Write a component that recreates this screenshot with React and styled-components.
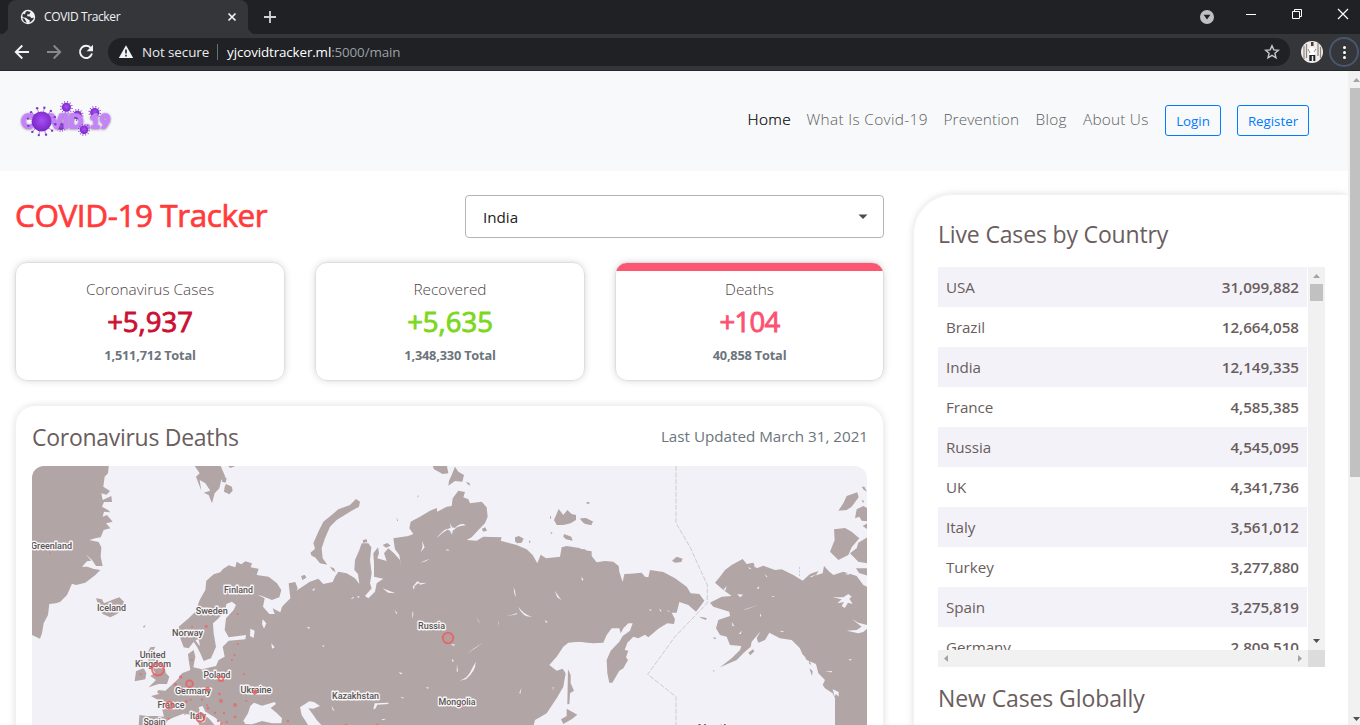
import React from "react";
import styled, { createGlobalStyle, css } from "styled-components";

const Global = createGlobalStyle`
  *, *::before, *::after { box-sizing: border-box; }
  html, body { margin: 0; height: 100%; overflow: hidden; }
  body { font-family: "Open Sans", "Noto Sans", sans-serif; background: #fff; }
`;

const Window = styled.div`
  width: 1360px;
  height: 725px;
  display: flex;
  flex-direction: column;
  overflow: hidden;
`;

/* ---------- browser chrome ---------- */

const TabStrip = styled.div`
  height: 34px;
  flex: none;
  display: flex;
  background: #202124;
  padding-left: 8px;
`;

const Tab = styled.div`
  position: relative;
  width: 240px;
  height: 34px;
  display: flex;
  align-items: center;
  padding: 0 9px 0 12px;
  background: #35363a;
  border-radius: 8px 8px 0 0;
  &::before, &::after {
    content: "";
    position: absolute;
    bottom: 0;
    width: 8px;
    height: 8px;
  }
  &::before { left: -8px; background: radial-gradient(circle at 0 0, #202124 8px, #35363a 8.5px); }
  &::after { right: -8px; background: radial-gradient(circle at 100% 0, #202124 8px, #35363a 8.5px); }
`;

const TabTitle = styled.span`
  flex: 1;
  margin: -1px 0 0 8px;
  font-size: 12px;
  letter-spacing: -0.38px;
  color: #f1f3f4;
`;

const NewTab = styled.div`
  width: 44px;
  display: flex;
  align-items: center;
  justify-content: center;
`;

const WindowControls = styled.div`
  margin-left: auto;
  display: flex;
  align-items: center;
  padding-right: 11px;
`;

const Toolbar = styled.div`
  height: 37px;
  flex: none;
  display: flex;
  align-items: center;
  background: #35363a;
  border-bottom: 1px solid #27282b;
  padding: 0 1px 0 14px;
`;

const NavIcons = styled.div`
  display: flex;
  gap: 16px;
  width: 94px;
  svg { display: block; }
`;

const AddressBar = styled.div`
  flex: none;
  width: 1182px;
  height: 28px;
  border-radius: 14px;
  background: #202124;
  display: flex;
  align-items: center;
  padding: 0 10px;
  font-size: 13.4px;
  color: #e8eaed;
`;

const Security = styled.span`
  margin-left: 8px;
  letter-spacing: -0.08px;
`;

const Separator = styled.span`
  width: 1px;
  height: 16px;
  margin: 0 9px 0 8px;
  background: #6b6e73;
`;

const Url = styled.span`
  flex: 1;
  color: #9aa0a6;
  letter-spacing: -0.13px;
  b { font-weight: 400; color: #fff; }
`;

const Avatar = styled.span`
  margin-left: 11px;
  width: 22px;
  height: 22px;
  svg { display: block; }
`;

const MenuButton = styled.span`
  margin-left: 6px;
  width: 30px;
  height: 30px;
  border: 2px solid #4b5671;
  border-radius: 50%;
  display: flex;
  flex-direction: column;
  align-items: center;
  justify-content: center;
  gap: 2px;
  i { width: 3px; height: 3px; border-radius: 50%; background: #fff; }
`;

/* ---------- page ---------- */

const Viewport = styled.div`
  flex: 1;
  min-height: 0;
  display: flex;
`;

const Page = styled.div`
  width: 1349px;
  overflow: hidden;
  color: #6a5d5d;
`;

const PageScroll = styled.div`
  flex: 1;
  display: flex;
  flex-direction: column;
  align-items: flex-start;
  background: #f1f1f1;
  padding: 7px 0 4px 2px;
  svg { margin-left: 3px; display: block; }
`;

const PageThumb = styled.div`
  width: 100%;
  height: 389px;
  margin: 6px 0 auto;
  background: #c1c1c1;
`;

const Navbar = styled.header`
  height: 100px;
  display: flex;
  align-items: center;
  background: #f8f9fb;
  padding: 0 40px 2px 16px;
`;

const Links = styled.nav`
  margin-left: auto;
  margin-right: -1px;
  display: flex;
  align-items: center;
  gap: 16px;
`;

const NavLink = styled.a`
  width: ${(p) => p.$w}px;
  margin-top: -2px;
  white-space: nowrap;
  font-size: 15.4px;
  font-weight: 300;
  letter-spacing: ${(p) => p.$ls || 0}px;
  color: ${(p) => (p.$active ? "#000" : "#5c5d5f")};
  ${(p) => p.$active && css`-webkit-text-stroke: 0.2px #000;`}
`;

const OutlineButton = styled.button`
  width: ${(p) => p.$w}px;
  height: 31px;
  margin-top: 1px;
  padding: 0;
  border: 1px solid #007bff;
  border-radius: 3px;
  background: transparent;
  font: 400 13.3px "Open Sans", sans-serif;
  color: #007bff;
`;

const Content = styled.main`
  display: flex;
  padding: 24px 0 0 15px;
  gap: 30px;
`;

const Left = styled.section`
  width: 869px;
`;

const TitleRow = styled.div`
  height: 43px;
  display: flex;
  justify-content: space-between;
  align-items: center;
`;

const Title = styled.h1`
  margin: -3px 0 0;
  font-size: 31.5px;
  font-weight: 400;
  line-height: 38px;
  letter-spacing: -0.42px;
  color: #ff3b3b;
  -webkit-text-stroke: 0.7px #ff3b3b;
`;

const Select = styled.div`
  width: 419px;
  height: 43px;
  display: flex;
  align-items: center;
  justify-content: space-between;
  padding: 0 14px 0 17px;
  border: 1px solid #b4b4b4;
  border-radius: 4px;
  font-size: 15.2px;
  color: #212121;
`;

const Stats = styled.div`
  display: grid;
  grid-template-columns: 270px 270px 269px;
  gap: 30px;
  margin-top: 24px;
`;

const StatCard = styled.article`
  height: 119px;
  border: 1px solid #dedede;
  border-radius: 12px;
  box-shadow: 0 0 8px -2px rgba(0, 0, 0, 0.25);
  overflow: hidden;
  display: flex;
  flex-direction: column;
  align-items: center;
  padding-top: 15px;
  ${(p) => p.$active && css`background: linear-gradient(#fc5673 8px, #fff 8px);`}
`;

const StatLabel = styled.div`
  font-size: 15.4px;
  font-weight: 300;
  line-height: 24px;
  color: #4f4444;
`;

const StatValue = styled.div`
  margin-top: 3px;
  font-size: 27.5px;
  font-weight: 400;
  line-height: 34px;
  letter-spacing: ${(p) => p.$ls || 0}px;
  color: ${(p) => p.$color};
  -webkit-text-stroke: 0.9px ${(p) => p.$color};
`;

const StatTotal = styled.div`
  margin-top: 7px;
  font-size: 12.8px;
  font-weight: 700;
  line-height: 18px;
  letter-spacing: -0.2px;
  color: #6c757d;
`;

const MapCard = styled.article`
  margin-top: 24px;
  height: 420px;
  border-radius: 20px;
  border: 1px solid #f1f1f1;
  padding: 0 16px;
  box-shadow: 0 0 8px -2px rgba(0, 0, 0, 0.2);
`;

const MapHeader = styled.div`
  height: 60px;
  display: flex;
  align-items: center;
  justify-content: space-between;
  padding-top: 1px;
`;

const Heading = styled.h2`
  margin: 0;
  font-size: 23px;
  font-weight: 400;
  line-height: 30px;
  letter-spacing: ${(p) => p.$ls || 0}px;
  color: #6a5d5d;
`;

const Updated = styled.span`
  margin: -2px -1px 0 0;
  font-size: 15.2px;
  color: #6c757d;
`;

const MapFrame = styled.div`
  width: 835px;
  height: 400px;
  border-radius: 12px;
  background: #f2f1f8;
  overflow: hidden;
  svg { display: block; }
  text {
    font-family: Roboto, sans-serif;
    font-size: 9.3px;
    font-weight: 500;
    fill: #5a5454;
    stroke: #f6f4f6;
    stroke-width: 2.8px;
    stroke-linejoin: round;
    paint-order: stroke;
    text-anchor: middle;
  }
`;

const Side = styled.aside`
  flex: none;
  width: 435px;
  height: 600px;
  margin: -1px 0 0 -1px;
  padding: 24px 24px 0;
  border: 1px solid #f3f3f3;
  border-right: 0;
  border-radius: 40px 0 0 0;
  box-shadow: 0 0 8px -2px rgba(0, 0, 0, 0.22);
`;

const TableBox = styled.div`
  width: 387px;
  height: 400px;
  margin: 18px 0 16px 0;
  display: grid;
  grid-template-columns: 370px 17px;
  grid-template-rows: 383px 17px;
`;

const Rows = styled.div`
  overflow: hidden;
  padding-right: 1px;
`;

const Row = styled.div`
  height: 40px;
  display: flex;
  justify-content: space-between;
  align-items: center;
  padding: 0 8px 0 8px;
  font-size: 15.2px;
  background: ${(p) => (p.$odd ? "#f3f2f8" : "#fff")};
`;

const Country = styled.span`
  letter-spacing: -0.05px;
`;

const Count = styled.span`
  font-weight: 600;
  letter-spacing: -0.06px;
`;

const VScroll = styled.div`
  background: #f1f1f1;
  display: flex;
  flex-direction: column;
  align-items: center;
  justify-content: space-between;
  padding: 7px 0;
`;

const VTop = styled.div`
  display: flex;
  flex-direction: column;
  align-items: center;
  gap: 6px;
`;

const VThumb = styled.div`
  width: 13px;
  height: 17px;
  background: #c1c1c1;
`;

const HScroll = styled.div`
  background: #f1f1f1;
  display: flex;
  align-items: center;
  justify-content: space-between;
  padding: 0 6px;
`;

const Corner = styled.div`
  background: #dcdcdc;
`;

const Arrow = ({ dir, dark }) => {
  const c = dark ? "#505050" : "#a3a3a3";
  if (dir === "up") return <svg width="7" height="4"><path d="M0 4 3.5 0 7 4z" fill={c} /></svg>;
  if (dir === "down") return <svg width="7" height="4"><path d="M0 0h7L3.5 4z" fill={c} /></svg>;
  if (dir === "left") return <svg width="4" height="7"><path d="M4 0v7L0 3.5z" fill={c} /></svg>;
  return <svg width="4" height="7"><path d="M0 0v7l4-3.5z" fill={c} /></svg>;
};

const GlobeIcon = () => (
  <svg width="16" height="16" viewBox="0 0 16 16">
    <circle cx="8" cy="8" r="7.2" fill="#f1f3f4" />
    <path d="M7.2 2.1 10.6 3 9.4 5.2 7 5.4 7.4 7.2 10 7.6 11.6 9.2 13.8 8.6 13.4 10.2 11 12.8 9.4 13.4 9.8 11.2 8.2 10.4 6 8.8 3.6 8.6 2.2 7.2 3 4.8 5 5.2 5.6 3z" fill="#35363a" />
    <path d="M2 8.8 4.6 9.8 5.8 11.8 6.6 13.9 3.8 12.6z" fill="#35363a" />
  </svg>
);

const Virus = ({ x, y, r, big }) => {
  const reach = big ? r + 4 : r + 1.4;
  return (
    <g>
      {Array.from({ length: 12 }, (_, k) => {
        const a = (k * Math.PI) / 6 + 0.2;
        const px = x + reach * Math.cos(a);
        const py = y + reach * Math.sin(a);
        return (
          <g key={k}>
            <line x1={x} y1={y} x2={px} y2={py} stroke="#a56bd8" strokeWidth="0.8" />
            <circle cx={px} cy={py} r={big ? 1.2 : 0.5} fill="#8636cc" />
          </g>
        );
      })}
      <circle cx={x} cy={y} r={r} fill="url(#v)" />
    </g>
  );
};

const Logo = () => (
  <svg width="104" height="60" viewBox="0 0 104 60">
    <defs>
      <radialGradient id="v" cx="50%" cy="45%">
        <stop offset="0" stopColor="#a94df5" />
        <stop offset="1" stopColor="#7c2acb" />
      </radialGradient>
      <filter id="soft" x="-10%" y="-30%" width="120%" height="160%">
        <feDropShadow dx="0" dy="0.5" stdDeviation="1" floodColor="#5d4a75" floodOpacity="0.8" />
      </filter>
    </defs>
    <g transform="translate(-16 0)">
      <Virus x={66.4} y={17.3} r={4.5} />
      <Virus x={94.7} y={22.4} r={4.5} />
      <Virus x={77.5} y={25} r={4.2} />
      <Virus x={61} y={36.5} r={3.4} />
      <g filter="url(#soft)" fill="#c583fa" stroke="#c583fa" strokeWidth="1.7" strokeLinejoin="round" fontFamily="Lato, sans-serif" fontWeight="900" fontSize="18.5">
        <text x="21.5" y="38.2" textLength="12" lengthAdjust="spacingAndGlyphs">C</text>
        <text x="50" y="38.2" textLength="33" lengthAdjust="spacingAndGlyphs">VID</text>
        <text x="85.5" y="38.2" textLength="25" lengthAdjust="spacingAndGlyphs">.19</text>
      </g>
      <Virus x={41.6} y={31.4} r={10} big />
      <Virus x={84} y={39.7} r={4.2} />
    </g>
  </svg>
);

/* ---------- map ---------- */

const LAND = "#b2a5a5";
const SEA = "#f2f1f8";

const westLand = [
  "M0 0H232L228 40 218 50 214 80 234 93 224 104 208 100 212 120 238 108 240 126 216 126 210 140 228 150 235 157 216 155 212 170 225 165 242 185 222 190 235 205 215 210 206 232 190 235 172 240 200 246 208 262 206 290 212 318 192 318 180 300 160 282 178 302 165 304 150 320 166 320 186 327 205 330 190 345 160 368 132 375 120 371 105 405 85 425 72 430 52 432 48 465 35 490 30 520 24 536 0 525Z",
  "M488 18H566L580 50 568 60 562 85 548 100 540 130 530 105 515 98 535 92 520 70 503 60 508 92 492 50 503 40ZM570 48l14 6-3 14-11-3ZM582 72l18 8 2 12-10 11-16-8 2-15ZM588 18h22l-15 6Z",
  "M192 415 210 418 216 430 240 420 262 412 276 425 275 448 255 462 235 472 212 462 205 450 215 440 198 432Z",
  "M440 500 470 475 490 455 503 420 520 390 523 362 545 343 565 337 572 328 590 316 610 322 614 305 628 313 640 304 660 310 656 322 680 326 674 345 710 350 735 370 748 390 742 412 720 420 690 408 676 404 698 415 693 440 712 462 728 462 722 445 745 457 750 440 775 415 770 370 790 366 797 385 790 402 810 385 830 368 850 362V800H320L322 765 345 768 372 768 396 770 390 745 378 720 357 708 380 702 378 690 400 692 425 670 440 655 450 640 475 630 470 600 468 582 485 570 490 590 484 622 510 628 552 618 560 600 578 590 572 560 590 542 640 538 642 525 590 532 578 510 582 475 605 450 612 435 600 425 583 432 580 450 560 475 543 490 545 520 552 560 537 595 515 603 505 580 495 560 485 545 470 565 455 562 445 535Z",
  "M348 575 355 562 370 560 362 575 385 580 380 600 398 625 402 640 412 650 405 672 380 672 350 682 372 660 355 648 370 638 350 610ZM312 634 335 624 343 640 340 658 308 664Z",
  "M808 350 818 345 822 352 812 360ZM835 278l10-8v22ZM334 500l6-6v5Z",
];
const westSea = [
  "M396 800 408 780 430 770 458 760 480 767 500 790 504 800ZM512 738 500 742 504 756 530 775 552 800H580L548 772 520 755Z",
  "M634 782 648 760 655 738 666 728 690 737 708 732 728 726 732 732 716 744 735 760 750 775 748 790 720 790 690 783 660 793 640 792Z",
  "M800 750 850 718V800H828L808 768Z",
  "M655 506 668 512 665 534 654 528ZM692 478 703 490 696 506 690 492ZM718 550l10 12-8 4ZM490 540l10-2 4 20-6-6ZM826 500l8 1-4 4ZM508 628l12 4-8 4Z",
];
const midLand = [
  "M-20 398 0 385 30 365 55 356 70 372 98 366 105 350 115 335 140 340 165 355 178 372 174 342 163 330 165 300 178 270 185 250 205 250 214 262 210 300 215 340 210 370 215 385 195 408 205 415 225 395 230 370 250 356 222 350 222 310 220 280 234 262 237 280 232 295 260 303 252 280 265 265 282 280 300 300 304 322 298 285 285 268 280 235 325 228 340 222 328 205 332 185 360 170 390 152 410 144 412 155 440 140 455 138 458 115 475 92 495 96 490 112 505 118 510 130 545 125 560 142 563 170 555 190 535 210 515 232 500 240 530 242 550 230 605 232 602 242 650 255 680 268 698 285 712 310 722 284 738 295 780 290 785 262 800 258 838 264 850 270 875 274V548L835 545 805 548 790 560 770 590 748 615 770 632 788 626 797 640 790 680 770 715 740 760 720 772 705 780 700 800H-20Z",
  "M168 117 180 125 177 140 150 155 110 180 90 200 75 235 65 265 68 295 82 314 60 310 45 292 32 285 45 265 40 250 55 215 70 185 95 165 115 148 150 135ZM90 320l12 5 5 12-10-6ZM4 348l10-3 5 8-12 6ZM188 240l12-2 2 8-12 3ZM248 255l14-6 10 8-14 6Z",
  "M397 14H440L445 40 428 42 402 28ZM465 20 475 35 492 45 487 65 465 63 445 77 447 62 455 45ZM498 65l10 4 3 8-8-4ZM546 206l10-4 5 10-12 3ZM645 232l12-4 14 8-6 12-14 2-6-6ZM688 240l4 6-5 4Z",
  "M776 147 790 165 802 150 815 162 828 165 828 180 812 190 790 195 770 195 762 180ZM840 176 855 175 875 184V196L850 188ZM792 222l22 8 4 12-20-4-8-8ZM860 126h6v5ZM750 165l4 10-4 2ZM752 215l6 4-5 3ZM290 172l4 10-3 2ZM352 108l4-2-2 8Z",
  "M804 628 812 645 812 670 822 692 810 700 808 732 802 733 803 680ZM800 746 832 764 815 778 790 792 783 778 800 768Z",
];
const midSea = [
  "M440 208 452 204 450 190 456 202 468 205 458 212 456 224 450 212ZM410 235Q425 212 442 206L440 211Q425 218 410 235ZM466 202Q480 190 490 192L498 196Q480 196 466 204Z",
  "M478 662Q505 655 515 628L527 606Q528 632 498 658ZM500 582Q525 562 552 547L530 562ZM655 440Q670 462 696 471L680 469Q662 460 655 440ZM620 469 652 459 650 463ZM641 382Q648 395 647 412Q641 400 641 382ZM764 392 784 420 772 412ZM816 412l12 14-10-6ZM336 452l4 10-2 15ZM471 612l3 25-4-4ZM366 242l8 20-12 15 6-17ZM360 308l28-12-10 8ZM338 380l14-16 8 3-16 10-2 12ZM356 370l25-2-20 6ZM248 385l38 15-22-2ZM152 418l8-8 2 4ZM36 390l10-6-4 8ZM528 472l14 22-6-12ZM594 488l2-4-2 15ZM664 684l-3 18-3-4ZM735 480l8 6-5 3Z",
  "M220 748 224 730 265 728V732L232 734 226 746ZM0 742 28 724 42 726 60 738 40 746 25 745 40 765 50 780 65 796H25L5 765ZM94 736l10 18-6-4ZM296 637l12 2-6 4ZM452 552l14 2-6 4ZM284 450l8 10-3 2ZM378 681l10 2-6 3ZM302 710l12 4-8 1ZM20 500l12 3-6 3ZM66 558l8-2-4 5ZM244 778l14-2-8 5ZM455 598l6 2-2 8ZM758 682l3-2-2 12ZM810 452l8-2-6 8ZM848 352l3 3-3 8ZM436 270l8-2 4 4ZM172 408l8 2-6 4Z",
];
const eastLand = [
  "M-40 266 15 268 30 282 50 307 75 303 100 305 116 318 118 335 128 366 133 342 185 338 195 350 205 352 210 330 250 336 285 355 320 380 332 400 358 402 373 422 360 440 348 455 325 435 298 426 290 458 275 458 285 478 282 492 262 490 235 506 205 532 195 524 175 535 160 530 142 548 134 570 145 572 138 592 144 600 130 625 118 632 105 655 97 668 88 668 82 640 80 600 92 572 118 545 128 528 150 512 158 490 145 490 130 505 122 520 118 505 95 505 80 525 70 548 40 550 0 545H-40Z",
  "M405 368 420 350 435 330 455 315 488 297 500 312 520 308 530 325 550 317 585 330 605 328 640 345 668 362 690 342 715 333 708 346 728 340 732 318 748 335 760 345 790 335 830 348 850 375 870 385V800H765L765 715 758 700 735 685 728 675 735 660 715 640 708 612 680 600 660 565 635 540 600 535 568 518 555 540 535 548 530 534 542 514 515 545 512 560 490 580 470 600 420 622 455 595 480 570 484 558 450 555 440 530 420 525 408 505 415 480 432 474 450 468 448 455 400 440 390 428 425 410 455 408 430 390Z",
  "M762 208 795 204 815 215 838 235 815 262 805 285 775 300 750 275 764 240ZM775 152 790 130 800 108 832 97 836 112 815 140 800 150ZM830 148 850 138 868 148V185L845 182 838 170 825 175ZM835 248 862 232V310L835 305 810 280 830 265ZM845 80l8 0 8 15-10-6ZM848 198l14-8v18ZM828 325l34 0v22l-25-8ZM845 120l8 3-4 6Z",
  "M0 176 18 174 40 185 32 194 15 192ZM20 126h8v5h-8ZM276 302 290 290 308 296 304 306 285 308ZM505 578l14-10 4 6-12 12ZM398 532l12 2-6 4ZM398 634l4-4 2 4ZM358 470l22 4-2 6-14-5ZM660 565l15 5 5 22-12-8ZM688 625l10 8-2 15ZM686 595l8 20-6-4Z",
];
const eastSea = [
  "M758 412 790 412 805 402 815 410 808 416 818 432 804 428 794 444 785 438 792 426 772 430 785 418ZM800 512 830 510 845 500 815 476 835 488 862 495V505L850 516 835 520ZM758 688l18 8 0 14-8-8-4 8ZM735 635l22-2-2 4ZM488 450 535 435 500 448ZM472 402l18 2-10 8ZM530 385l8-6-2 8ZM555 342l8 10-5-2ZM455 485l8 14-6-2ZM476 522l10-10-4 10ZM598 512l14 2-4 3ZM806 598l10 0-6 4ZM128 365l8-25 50-2-50 3ZM238 445l8 10-6-2ZM262 450l10 6-8-2ZM208 448l8 2-6 3ZM505 320l10 8-8-2ZM522 312l8 10-6 0Z",
  "M795 342l22-6-12 8ZM430 390l10-12-4 14ZM540 460l4 8-4 2ZM575 408h10l-6 3ZM690 350l22-8-18 10ZM4 350l6 8-4 6ZM150 550l6 4-6 2Z",
];

const labels = [
  ["Greenland", 19.5, 83, 41],
  ["Iceland", 79.5, 145, 29],
  ["Finland", 206.5, 127, 29],
  ["Sweden", 179.7, 148, 32],
  ["Norway", 155.5, 170, 31],
  ["United", 120.7, 192, 26],
  ["Kingdom", 121, 201, 36],
  ["Poland", 185, 212, 27],
  ["Germany", 161, 228, 36],
  ["Ukraine", 224, 227, 31],
  ["France", 139, 242, 27],
  ["Italy", 166, 253, 16],
  ["Spain", 122.5, 259, 22],
  ["Russia", 399.5, 163, 27],
  ["Kazakhstan", 323.5, 233, 47],
  ["Mongolia", 425, 239, 37],
  ["North", 682, 265, 33],
];

const rings = [
  [126, 203.5, 6], [157.5, 217.7, 3.4], [137.5, 239.3, 3.6], [168.5, 251.5, 4.2],
  [189, 212.8, 2.4], [223, 226, 1.6], [416, 172, 5.3], [175.5, 223, 1.4],
];

const dots = [
  [54, 279, 2], [242, 441, 2], [336, 500, 2], [480, 500, 2.4], [523, 499, 4], [617, 462, 2.6], [617, 552, 2.6], [608, 585, 2.6], [600, 600, 2.6],
  [480, 600, 2.6], [326, 643, 3], [446, 651, 4.5], [430, 673, 4], [450, 687, 2.5], [636, 643, 2.6], [378, 696, 2.2], [463, 724, 3.6], [476, 719, 2.4],
  [510, 719, 3], [562, 702, 3.6], [567, 723, 5], [609, 735, 5], [643, 723, 2.6], [525, 736, 2.6], [528, 745, 3.2], [549, 759, 3], [576, 759, 3],
  [609, 771, 3.6], [459, 762, 2.2], [410, 776, 2.6], [558, 783, 3], [568, 792, 3.6], [768, 783, 3], [584, 786, 3], [976, 711, 2.2], [1293, 734, 2.6],
  [942, 796, 4], [1035, 796, 4], [356, 624, 3], [669, 697, 4],
];

const Shapes = ({ x, land, sea }) => (
  <g transform={`translate(${x} -6) scale(0.33333)`}>
    {land.map((d, i) => <path key={i} d={d} fill={LAND} />)}
    {sea.map((d, i) => <path key={i} d={d} fill={SEA} />)}
  </g>
);

const WorldMap = () => (
  <svg width="835" height="259" viewBox="0 0 835 259">
    <Shapes x={0} land={westLand} sea={westSea} />
    <Shapes x={268} land={midLand} sea={midSea} />
    <Shapes x={548} land={eastLand} sea={eastSea} />
    <path d="M644 0V57L658 81 675.3 119V137L643 170.7 615.7 208.3 644 230.7V259" fill="none" stroke="#cfcbcf" strokeWidth="1" strokeDasharray="5 1.5" />
    <path d="M767.5 101v10" stroke="#cfcbcf" strokeDasharray="2 1.5" />
    {labels.map(([t, x, y, w]) => (
      <text key={t} x={x} y={y} textLength={w} lengthAdjust="spacingAndGlyphs">{t}</text>
    ))}
    {dots.map(([x, y, s], i) => (
      <circle key={i} cx={x / 3} cy={y / 3 - 6} r={s / 2.6} fill="#e86a6c" fillOpacity="0.85" />
    ))}
    {rings.map(([x, y, r], i) => (
      <circle key={i} cx={x} cy={y} r={r} fill="#e4595c" fillOpacity="0.12" stroke="#ea5f62" strokeOpacity="0.85" strokeWidth="1.8" />
    ))}
  </svg>
);

const countries = [
  ["USA", "31,099,882"],
  ["Brazil", "12,664,058"],
  ["India", "12,149,335"],
  ["France", "4,585,385"],
  ["Russia", "4,545,095"],
  ["UK", "4,341,736"],
  ["Italy", "3,561,012"],
  ["Turkey", "3,277,880"],
  ["Spain", "3,275,819"],
  ["Germany", "2,809,510"],
];

const Chrome = () => (
  <>
    <TabStrip>
      <Tab>
        <GlobeIcon />
        <TabTitle>COVID Tracker</TabTitle>
        <svg width="14" height="14"><path d="M3.5 3.5l7 7m0-7l-7 7" stroke="#f1f3f4" strokeWidth="1.7" /></svg>
      </Tab>
      <NewTab>
        <svg width="12" height="12"><path d="M6 0v12M0 6h12" stroke="#d0d2d5" strokeWidth="1.8" /></svg>
      </NewTab>
      <WindowControls>
        <svg width="150" height="34" viewBox="1199 0 150 34">
          <circle cx="1207" cy="17" r="7" fill="#bdc1c6" />
          <path d="M1203.6 14.8h6.8l-3.4 4.6z" fill="#202124" />
          <path d="M1246 14.5h10" stroke="#fff" />
          <path d="M1292.5 11.5h7v7h-7zM1294.5 11.5v-2h7v7h-2" fill="none" stroke="#fff" />
          <path d="M1338 9l10 10m0-10l-10 10" stroke="#fff" strokeWidth="1.2" />
        </svg>
      </WindowControls>
    </TabStrip>
    <Toolbar>
      <NavIcons>
        <svg width="16" height="16"><path d="M15 8H2M8.3 1.5L1.8 8l6.5 6.5" fill="none" stroke="#f1f3f4" strokeWidth="1.9" /></svg>
        <svg width="16" height="16"><path d="M1 8h13M7.7 1.5L14.2 8l-6.5 6.5" fill="none" stroke="#87898c" strokeWidth="1.9" /></svg>
        <svg width="16" height="16"><path d="M13 4.2A6.1 6.1 0 1 0 14 9.6" fill="none" stroke="#f1f3f4" strokeWidth="1.9" /><path d="M15 .8v6.4H8.6z" fill="#f1f3f4" /></svg>
      </NavIcons>
      <AddressBar>
        <svg width="16" height="16"><path d="M8 1.2L15.2 14H.8z" fill="#f1f3f4" /><path d="M8 5.6v4M8 10.8v1.8" stroke="#202124" strokeWidth="1.6" /></svg>
        <Security>Not secure</Security>
        <Separator />
        <Url><b>yjcovidtracker.ml</b>:5000/main</Url>
        <svg width="16" height="16"><path d="M8 1.7l1.8 4.2 4.6.4-3.5 3 1.1 4.5L8 11.4l-4 2.4 1.1-4.5-3.5-3 4.6-.4z" fill="none" stroke="#c6c8cb" strokeWidth="1.4" /></svg>
      </AddressBar>
      <Avatar>
        <svg width="22" height="22" viewBox="0 0 22 22">
          <defs><clipPath id="av"><circle cx="11" cy="11" r="11" /></clipPath></defs>
          <g clipPath="url(#av)">
            <rect width="22" height="22" fill="#eeebe8" />
            <path d="M3 5v13M5.5 3v14M17 2v13M19.5 6v11" stroke="#8f8680" strokeWidth="1.2" />
            <path d="M7 8l4-2 4 3-1 5H8z" fill="#fff" />
            <path d="M10 1h2.5v4H10z" fill="#4a3c38" />
            <path d="M8.3 14h6v6h-2v-5h-1.5v5H8.3z" fill="#20242c" />
            <path d="M7 8l2 4M15 8l-2 3" stroke="#a58171" />
          </g>
        </svg>
      </Avatar>
      <MenuButton><i /><i /><i /></MenuButton>
    </Toolbar>
  </>
);

export default function App() {
  return (
    <Window>
      <Global />
      <Chrome />
      <Viewport>
        <Page>
          <Navbar>
            <Logo />
            <Links>
              <NavLink $active $w={43} $ls={0.35}>Home</NavLink>
              <NavLink $w={121} $ls={0.33}>What Is Covid-19</NavLink>
              <NavLink $w={76} $ls={0.08}>Prevention</NavLink>
              <NavLink $w={31.5} $ls={0.25}>Blog</NavLink>
              <NavLink $w={66} $ls={0.2}>About Us</NavLink>
              <OutlineButton $w={56}>Login</OutlineButton>
              <OutlineButton $w={72}>Register</OutlineButton>
            </Links>
          </Navbar>
          <Content>
            <Left>
              <TitleRow>
                <Title>COVID-19 Tracker</Title>
                <Select>
                  India
                  <svg width="12" height="6"><path d="M1.5 .5h9L6 5z" fill="#4c4c4c" /></svg>
                </Select>
              </TitleRow>
              <Stats>
                <StatCard>
                  <StatLabel>Coronavirus Cases</StatLabel>
                  <StatValue $color="#cc1034">+5,937</StatValue>
                  <StatTotal>1,511,712 Total</StatTotal>
                </StatCard>
                <StatCard>
                  <StatLabel>Recovered</StatLabel>
                  <StatValue $color="#7dd71d">+5,635</StatValue>
                  <StatTotal>1,348,330 Total</StatTotal>
                </StatCard>
                <StatCard $active>
                  <StatLabel>Deaths</StatLabel>
                  <StatValue $color="#fb5271" $ls={-0.7}>+104</StatValue>
                  <StatTotal>40,858 Total</StatTotal>
                </StatCard>
              </Stats>
              <MapCard>
                <MapHeader>
                  <Heading $ls={-0.28}>Coronavirus Deaths</Heading>
                  <Updated>Last Updated March 31, 2021</Updated>
                </MapHeader>
                <MapFrame><WorldMap /></MapFrame>
              </MapCard>
            </Left>
            <Side>
              <Heading $ls={-0.16}>Live Cases by Country</Heading>
              <TableBox>
                <Rows>
                  {countries.map(([name, n], i) => (
                    <Row key={name} $odd={i % 2 === 0}>
                      <Country>{name}</Country>
                      <Count>{n}</Count>
                    </Row>
                  ))}
                </Rows>
                <VScroll>
                  <VTop><Arrow dir="up" /><VThumb /></VTop>
                  <Arrow dir="down" dark />
                </VScroll>
                <HScroll><Arrow dir="left" /><Arrow dir="right" /></HScroll>
                <Corner />
              </TableBox>
              <Heading $ls={-0.1}>New Cases Globally</Heading>
            </Side>
          </Content>
        </Page>
        <PageScroll>
          <Arrow dir="up" />
          <PageThumb />
          <Arrow dir="down" dark />
        </PageScroll>
      </Viewport>
    </Window>
  );
}
